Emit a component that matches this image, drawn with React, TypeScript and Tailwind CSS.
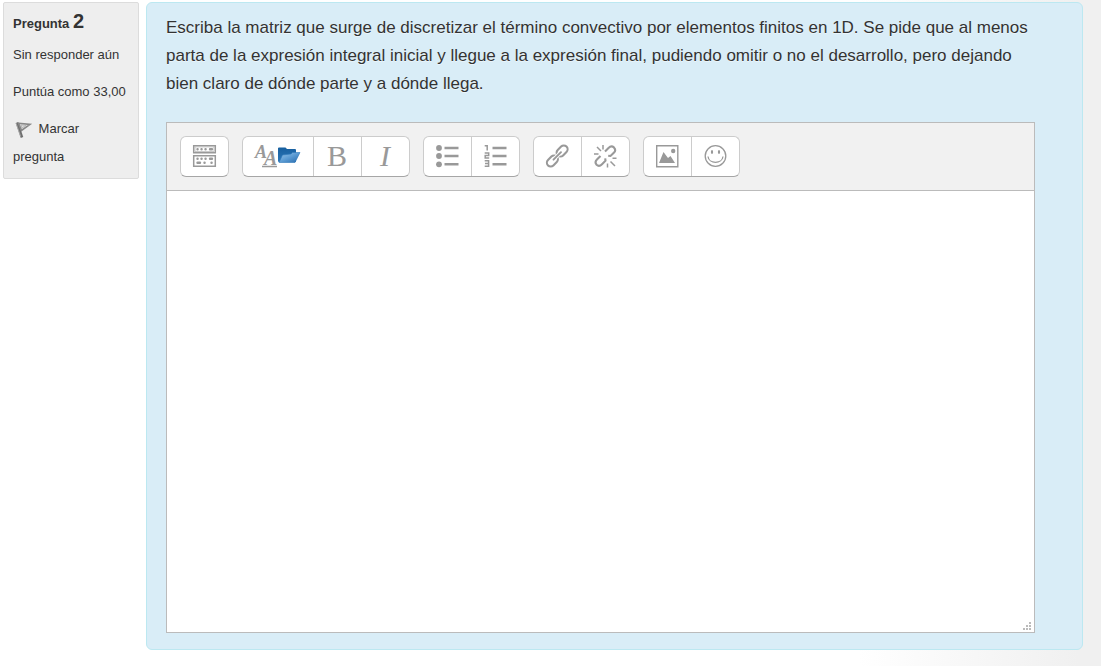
import type { ReactNode } from "react";

function ToolGroup({ children }: { children: ReactNode }) {
  return (
    <div className="flex divide-x divide-[#cccccc] overflow-hidden rounded-md border border-[#cccccc] border-b-[#a6a6a6] bg-white">
      {children}
    </div>
  );
}

function Tool({ label, children }: { label: string; children: ReactNode }) {
  return (
    <button type="button" aria-label={label} title={label} className="flex px-3 py-2 hover:bg-gray-100">
      {children}
    </button>
  );
}

function Icon({ width = 23, children }: { width?: number; children: ReactNode }) {
  return (
    <svg width={width} height="23" viewBox={`0 0 ${width} 23`} fill="none" stroke="#999" aria-hidden="true" className="block shrink-0 overflow-visible">
      {children}
    </svg>
  );
}

function KeyboardIcon() {
  return (
    <Icon>
      <path d="M.7.7h21.600v7H.7zM.7 10.700h21.600v10.600H.7z" strokeWidth="1.500" />
      <path d="M2 1.900h19v4.600H2z" stroke="#bbb" strokeWidth=".8" />
      <path d="M4.500 4.200h.1M8.500 4.200h.1M12.500 4.200h.1M17 4.200h2" strokeWidth="2.400" strokeLinecap="round" />
      <path d="M4.500 13.800h.1M8.500 13.800h.1M12.500 13.800h.1M17 13.800h2M4.500 17.800h2.500M11.500 17.800h.1M18.500 17.800h.1" strokeWidth="2.400" strokeLinecap="round" />
    </Icon>
  );
}

function FontIcon() {
  return (
    <Icon width={46}>
      <defs>
        <linearGradient id="folder-back" x1="0" y1="0" x2="0" y2="1">
          <stop stopColor="#175f9f" />
          <stop offset="1" stopColor="#2b77b8" />
        </linearGradient>
        <linearGradient id="folder-front" x1="0" y1="0" x2="1" y2="1">
          <stop stopColor="#9cc7ea" />
          <stop offset=".5" stopColor="#5b9bd3" />
          <stop offset="1" stopColor="#2468ab" />
        </linearGradient>
      </defs>
      <g fill="#999" stroke="none" fontFamily="'Liberation Serif', serif" fontStyle="italic" fontWeight="bold">
        <text x="0" y="13" fontSize="18">A</text>
        <text x="9" y="20" fontSize="20">A</text>
      </g>
      <path d="M7 21.500h15" strokeWidth="1.400" />
      <path d="M23 3.500q0-1 1-1h6.500l1.500 1.500h8q1 0 1 1V17H24q-1 0-1-1z" fill="url(#folder-back)" stroke="none" />
      <path d="M27.500 10 36 9l1.500-1.500H45L40 17.500H24z" fill="url(#folder-front)" stroke="#2f78ba" strokeWidth=".6" />
    </Icon>
  );
}

function LetterIcon({ letter, italic = false }: { letter: string; italic?: boolean }) {
  return (
    <Icon>
      <text
        x="11"
        y="21"
        textAnchor="middle"
        fontFamily="'Liberation Serif', serif"
        fontSize="30"
        fontStyle={italic ? "italic" : "normal"}
        fill="#999"
        stroke="none"
      >
        {letter}
      </text>
    </Icon>
  );
}

function BulletsIcon() {
  return (
    <Icon>
      <g fill="#999" stroke="none">
        <circle cx="3" cy="3" r="2.900" />
        <circle cx="3" cy="11" r="2.900" />
        <circle cx="3" cy="19.300" r="2.900" />
      </g>
      <path d="M8.500 3H22.500M8.500 11H22.500M8.500 19.300H22.500" strokeWidth="2.600" />
    </Icon>
  );
}

function NumbersIcon() {
  return (
    <Icon>
      <path d="M.7.8h2.500V5.500M.7 8h4v2.500H1.200v2.500h4M.7 15.700h3.900v5.600H.7M1 18.500h3.500" strokeWidth="1.500" />
      <path d="M8.500 3h14M8.500 11h14M8.500 19.300h14" strokeWidth="2.600" />
    </Icon>
  );
}

function LinkIcon() {
  return (
    <Icon>
      <g strokeWidth="2.100">
        <rect x="9.900" y="2.200" width="12.400" height="7.600" rx="3.800" transform="rotate(-45 16.100 6)" />
        <rect x="0.200" y="12.200" width="12.400" height="7.600" rx="3.800" transform="rotate(-45 6.400 16)" />
      </g>
      <path d="m8.500 13.700 5.500-5.500" stroke="#fff" strokeWidth="3.800" />
      <path d="m7.500 14.700 7.500-7.500" strokeWidth="1.900" strokeLinecap="round" />
    </Icon>
  );
}

function UnlinkIcon() {
  return (
    <Icon>
      <path d="M11 6.500 14.500 3q2.800-2.800 5.400-.6 2.600 2.700-.1 5.400L16.500 11l-2.300-.3" strokeWidth="2.100" />
      <path d="M6.500 11 3.200 14.300q-3 2.900-.6 5.400 2.500 2.400 5.400-.5l3.500-3.500-.3-2.400" strokeWidth="2.100" />
      <path d="M9 0v4.500M3 2 7 6M0 9h4.500M18.500 13.200H22.500M16.500 16.500l4.500 4.500M13.500 18.500v4" strokeWidth="1.500" />
    </Icon>
  );
}

function ImageIcon() {
  return (
    <Icon>
      <path d="M.7.7h21.100v21H.7z" strokeWidth="1.400" />
      <path d="M3 18 7.500 7l4.500 6 2.500-2 4.500 7z" fill="#999" stroke="none" />
      <circle cx="17.200" cy="6" r="2.200" fill="#999" stroke="none" />
    </Icon>
  );
}

function SmileIcon() {
  return (
    <Icon>
      <circle cx="11.500" cy="11" r="10.300" strokeWidth="1.300" />
      <path d="M4 11.500c.8 7.700 14.200 7.700 15 0" strokeWidth="1.300" />
      <ellipse cx="8" cy="7" rx="1.100" ry="2.100" fill="#999" stroke="none" />
      <ellipse cx="15" cy="7" rx="1.100" ry="2.100" fill="#999" stroke="none" />
    </Icon>
  );
}

function FlagIcon() {
  return (
    <svg width="22" height="20" viewBox="0 0 22 20" fill="none" aria-hidden="true" className="inline-block align-middle">
      <path d="m4 2.500 5 15" stroke="#6f6f6f" strokeWidth="2.600" />
      <path d="m3 3 4.500 13" stroke="#aaa" strokeWidth=".9" />
      <path d="m5.500 3.200 11.500 1.200-8.500 6z" stroke="#888" strokeWidth="1.600" fill="#ddd" />
      <path d="m8 5 5 .2-4 2.800z" stroke="#aaa" strokeWidth=".7" />
    </svg>
  );
}

export default function App() {
  return (
    <div className="min-h-screen bg-linear-to-r from-white from-78% to-[#f0f0f0] to-98% font-['Liberation_Sans',Arial,sans-serif] text-[#333333]">
      <div className="flex items-start gap-[7px] pt-0.5 pr-[18px] pb-4 pl-[3px]">
        <aside className="w-[136px] shrink-0 rounded-xs border border-[#dcdcdc] bg-[#eeeeee] px-[9px] pt-1 pb-[7px] text-[13px] leading-7">
          <h3 className="font-bold">
            Pregunta <span className="text-xl leading-7">2</span>
          </h3>
          <p className="mt-[3px]">Sin responder aún</p>
          <p className="mt-[9px]">Puntúa como 33,00</p>
          <a href="#marcar" className="mt-[9px] block">
            <FlagIcon /> Marcar pregunta
          </a>
        </aside>

        <main className="min-w-0 flex-1 rounded-md border border-[#bce8f1] bg-[#d9edf7] pt-[11px] pr-[47px] pb-4 pl-[19px]">
          <p id="enunciado" className="text-[17px] leading-7 text-shadow-[0_1px_0_rgba(255,255,255,0.5)]">
            Escriba la matriz que surge de discretizar el término convectivo por elementos finitos en 1D. Se pide que al
            menos parta de la expresión integral inicial y llegue a la expresión final, pudiendo omitir o no el
            desarrollo, pero dejando bien claro de dónde parte y a dónde llega.
          </p>

          <div className="relative mt-6 border border-[#bbbbbb] bg-white">
            <div role="toolbar" aria-label="Editor" className="flex flex-wrap gap-[13px] border-b border-[#bbbbbb] bg-[#f1f1f1] p-[13px]">
              <ToolGroup>
                <Tool label="Mostrar más botones"><KeyboardIcon /></Tool>
              </ToolGroup>
              <ToolGroup>
                <Tool label="Estilos de párrafo"><FontIcon /></Tool>
                <Tool label="Negrita"><LetterIcon letter="B" /></Tool>
                <Tool label="Cursiva"><LetterIcon letter="I" italic /></Tool>
              </ToolGroup>
              <ToolGroup>
                <Tool label="Lista con viñetas"><BulletsIcon /></Tool>
                <Tool label="Lista numerada"><NumbersIcon /></Tool>
              </ToolGroup>
              <ToolGroup>
                <Tool label="Enlace"><LinkIcon /></Tool>
                <Tool label="Quitar enlace"><UnlinkIcon /></Tool>
              </ToolGroup>
              <ToolGroup>
                <Tool label="Imagen"><ImageIcon /></Tool>
                <Tool label="Emoticono"><SmileIcon /></Tool>
              </ToolGroup>
            </div>
            <textarea
              aria-labelledby="enunciado"
              className="block h-[441px] w-full resize-none bg-white p-2 text-base outline-none"
            />
            <svg width="8" height="8" viewBox="0 0 8 8" fill="#bbb" aria-hidden="true" className="pointer-events-none absolute right-[3px] bottom-0.5">
              <path d="M6 0h2v2H6zM3 3h2v2H3zM6 3h2v2H6zM0 6h2v2H0zM3 6h2v2H3zM6 6h2v2H6z" />
            </svg>
          </div>
        </main>
      </div>
    </div>
  );
}
